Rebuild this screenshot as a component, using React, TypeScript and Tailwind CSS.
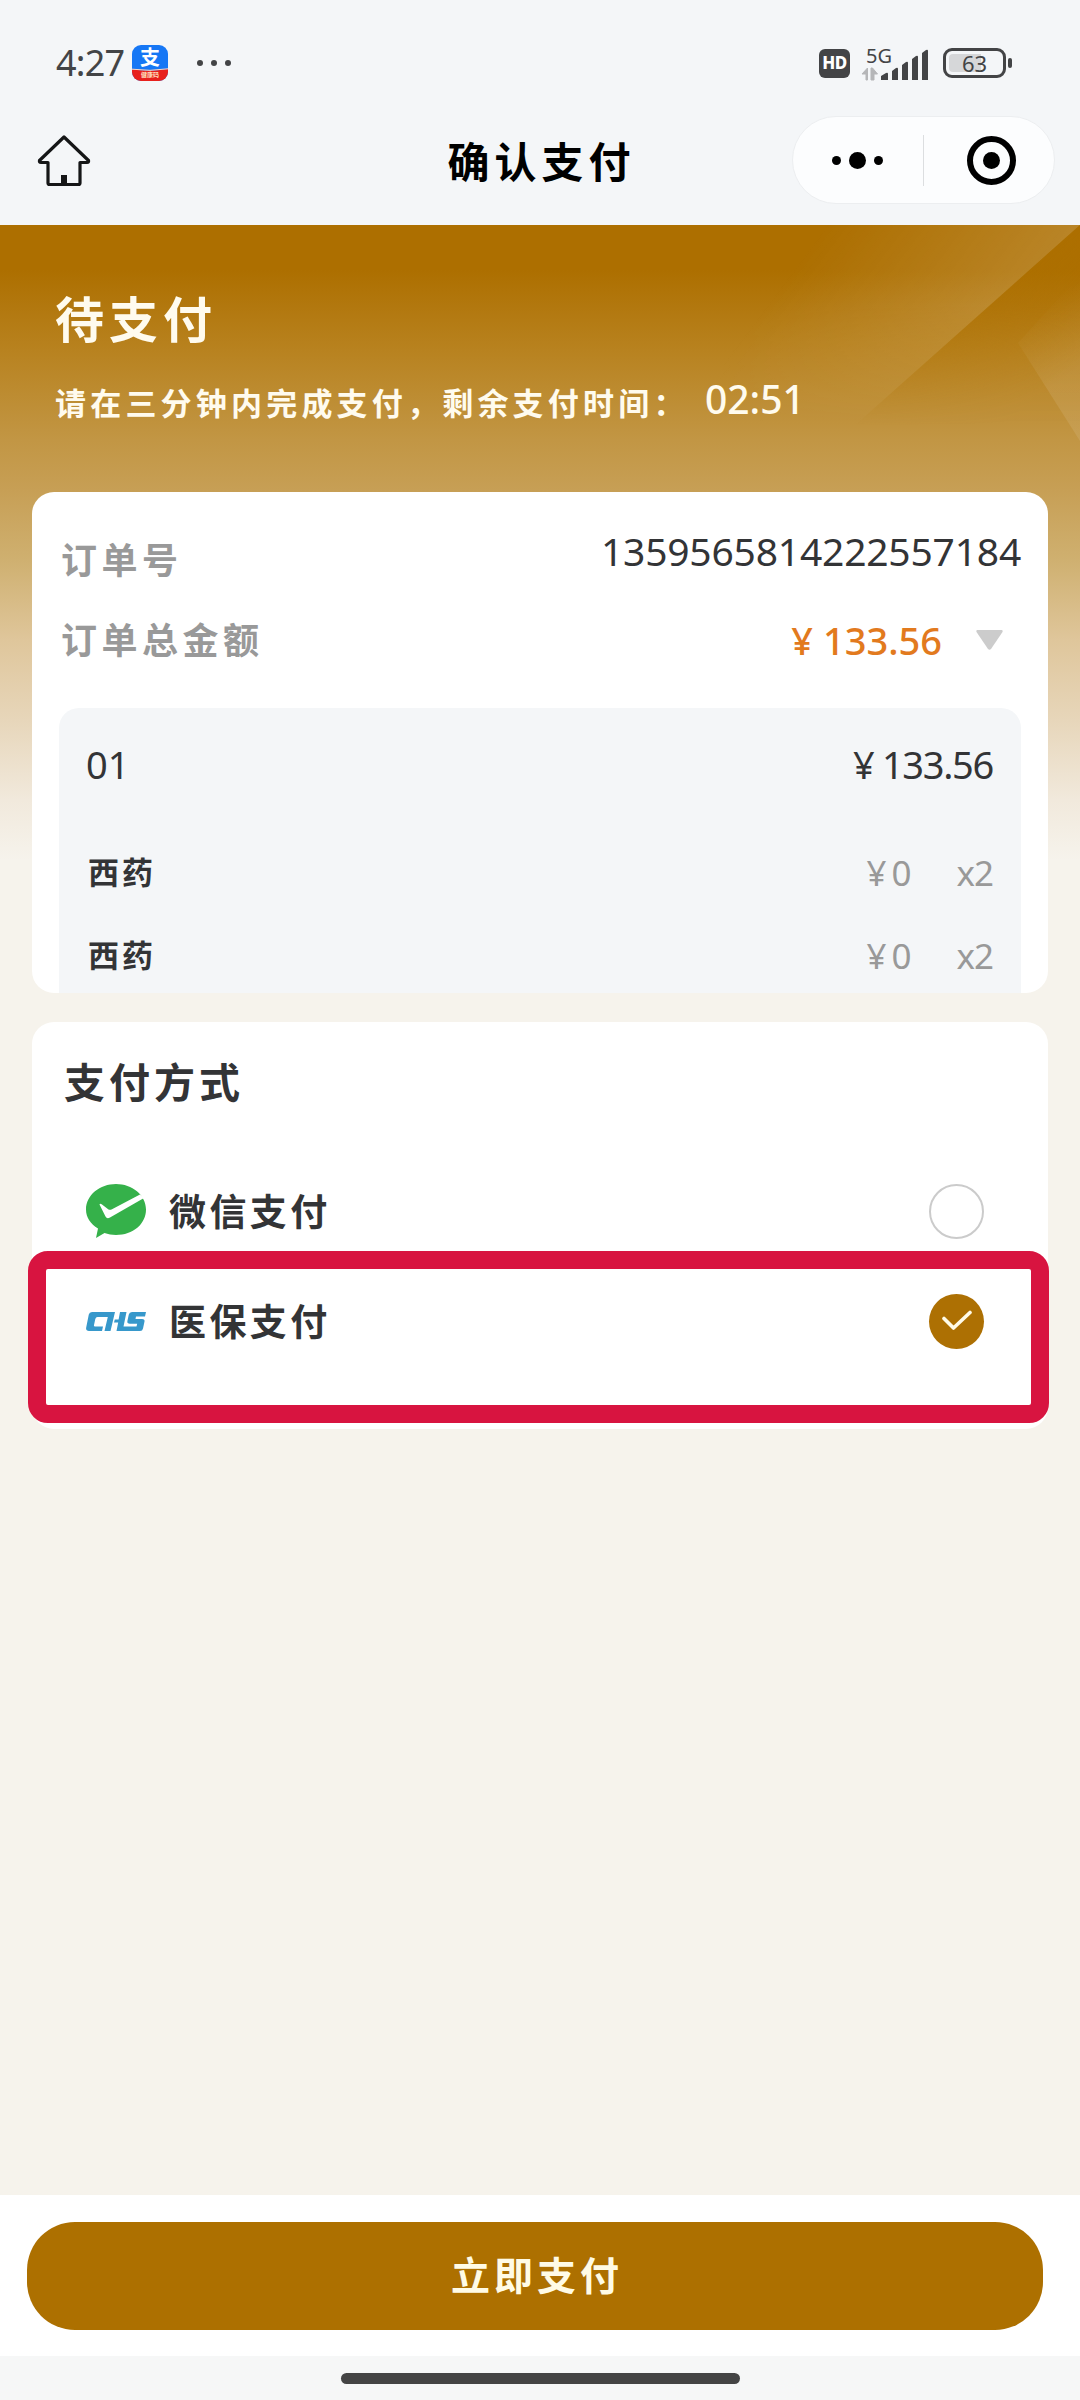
import { useState } from "react";

const CJK = "font-['Noto_Sans','Noto_Sans_CJK_SC',sans-serif]";

const medicines = [
  { name: "西药", price: "¥ 0", count: "x2" },
  { name: "西药", price: "¥ 0", count: "x2" },
];

function AlipayIcon() {
  return (
    <div className="relative flex h-9 w-9 flex-col items-center rounded-[9px] bg-[#1677f5]">
      <svg className="absolute inset-0 rounded-[9px]" viewBox="0 0 36 36" width="36" height="36">
        <path d="M0 24.5Q18 27 36 24V36H0Z" fill="#e8201c" />
        <path d="M0 24.2Q18 26.7 36 23.8" fill="none" stroke="#ffd9c4" strokeWidth="1" />
      </svg>
      <span className="relative text-[20px] leading-[26px] font-bold text-white">支</span>
      <span className="relative text-[6px] leading-[8px] font-bold text-[#ffe3c0]">健康码</span>
    </div>
  );
}

function StatusBar() {
  return (
    <div className="flex h-[102px] items-start justify-between pt-[45px] pr-[68px] pl-[56px] text-[#434446]">
      <div className="flex h-9 items-center">
        <span className="w-[76px] text-[36px] leading-9 tracking-[-0.8px]">4:27</span>
        <AlipayIcon />
        <div className="ml-[29px] flex gap-2">
          <i className="h-1.5 w-1.5 rounded-full bg-[#434446]" />
          <i className="h-1.5 w-1.5 rounded-full bg-[#434446]" />
          <i className="h-1.5 w-1.5 rounded-full bg-[#434446]" />
        </div>
      </div>
      <div className="flex h-9 items-center">
        <div className="flex h-[29px] w-[31px] items-center justify-center rounded-[6px] bg-[#434446] text-[17px] font-extrabold tracking-[-0.5px] text-white">
          HD
        </div>
        <svg className="-mt-1.5 ml-[11px]" width="70" height="42" viewBox="0 -8 70 42">
          <text x="5" y="16" fontSize="20" fill="#434446">5G</text>
          <path d="M1 27l5.500-6v12H5v-6z M10 33V21h1.500l5 6h-3.500v6z" fill="#b5b6b8" stroke="#b5b6b8" strokeWidth="1" />
          <path
            d="M20 29l5-3q2-1 2 1v6h-7z M31 24l4-3q2-1 2 1v11h-6z M41 18l4-3q2-1 2 1v17h-6z M51 12l4-3q2-1 2 1v23h-6z M61 6l4-3q2-1 2 1v29h-6z"
            fill="#434446"
          />
        </svg>
        <div className="ml-[12px] flex h-[30px] w-[63px] items-center rounded-[9px] border-3 border-[#434446] p-[3px]">
          <div className="relative flex h-full w-full items-center justify-center">
            <i className="absolute top-0 left-0 h-full w-[32px] rounded-l-[4px] bg-[#d6d7d9]" />
            <span className="relative text-[22px] leading-[18px]">63</span>
          </div>
        </div>
        <i className="ml-0.5 h-2.5 w-1 rounded-full bg-[#434446]" />
      </div>
    </div>
  );
}

function NavBar() {
  return (
    <div className="grid h-[123px] grid-cols-3 items-start pr-[25px] pl-[37px]">
      <svg className="mt-8" width="54" height="54" viewBox="0 0 54 54" fill="none">
        <path
          d="M27 3L2.500 26.500Q2 28.500 4 28.500H11V49Q11 50.500 12.500 50.500H41.500Q43 50.500 43 49V28.500H50Q52 28.500 51.500 26.500Z"
          stroke="#151617"
          strokeWidth="3.200"
          strokeLinejoin="round"
        />
        <path d="M24 41h6v10h-6z" fill="#151617" />
      </svg>
      <h1 className="-ml-[9px] pt-[34px] text-center text-[42px] leading-[52px] font-bold tracking-[5px] whitespace-nowrap text-black">
        确认支付
      </h1>
      <div className="mt-[14px] flex h-[88px] w-[263px] items-center justify-self-end rounded-full border border-[#eceef0] bg-[#fcfdfe]">
        <div className="flex w-[130px] items-center justify-center gap-2 pr-0.5">
          <i className="h-[9px] w-[9px] rounded-full bg-black" />
          <i className="h-[17px] w-[17px] rounded-full bg-black" />
          <i className="h-[9px] w-[9px] rounded-full bg-black" />
        </div>
        <i className="h-[51px] w-px bg-[#dcdee0]" />
        <div className="ml-[43px] flex h-[49px] w-[49px] items-center justify-center rounded-full border-6 border-black">
          <i className="h-[17px] w-[17px] rounded-full bg-black" />
        </div>
      </div>
    </div>
  );
}

function BannerRays() {
  return (
    <svg className="absolute top-0 right-0" width="360" height="267" viewBox="0 0 360 267">
      <defs>
        <linearGradient id="ray" gradientUnits="userSpaceOnUse" x1="90" y1="20" x2="250" y2="140">
          <stop offset="0" stopColor="#fff" stopOpacity="0" />
          <stop offset="1" stopColor="#fff" stopOpacity="0.15" />
        </linearGradient>
        <linearGradient id="shade" gradientUnits="userSpaceOnUse" x1="262" y1="84" x2="330" y2="160">
          <stop offset="0" stopColor="#ad7000" stopOpacity="0.4" />
          <stop offset="1" stopColor="#ad7000" stopOpacity="0.05" />
        </linearGradient>
        <linearGradient id="corner" gradientUnits="userSpaceOnUse" x1="310" y1="85" x2="350" y2="150">
          <stop offset="0" stopColor="#fff" stopOpacity="0" />
          <stop offset="1" stopColor="#fff" stopOpacity="0.09" />
        </linearGradient>
        <linearGradient id="fade" x1="0" y1="0" x2="0" y2="1">
          <stop offset="0.3" stopColor="#fff" />
          <stop offset="0.75" stopColor="#000" />
        </linearGradient>
        <mask id="fadeDown">
          <rect width="360" height="267" fill="url(#fade)" />
        </mask>
      </defs>
      <g mask="url(#fadeDown)">
        <path d="M0 0H360L60 267H0Z" fill="url(#ray)" />
        <path d="M360 0L60 267H360Z" fill="url(#shade)" />
      </g>
      <path d="M360 50L298 118L360 216Z" fill="url(#corner)" />
    </svg>
  );
}

function WechatPayIcon() {
  return (
    <svg width="60" height="54" viewBox="0 0 60 54">
      <path
        d="M30 0C46 0 60 11 60 25.500S47 51 30 51C26 51 22 50.200 18.500 49L10 54L12 44.500C4.500 40 0 33.500 0 25.500C0 11 14 0 30 0Z"
        fill="#35b14a"
      />
      <path
        d="M13.500 20.500Q14 19 16 20.500L22.500 25.500Q24 26.300 26 25.300L54 10.500L58 14L24 33.500Q21 35.500 19.500 32.500Z"
        fill="#fff"
      />
    </svg>
  );
}

function ChsIcon() {
  return (
    <svg width="60" height="19" viewBox="0 0 60 19" fill="#3798cb">
      <path d="M6 0H29L24.500 19H18.500L21.800 5H11.500Q9.800 5 9.300 7L8 13Q7.600 14.500 9 14.500H17L16 19H3Q-.5 19 .2 15.500L2.800 2.500Q3.300 0 6 0Z" />
      <path d="M34 0H40.500L37.500 14.500H50.500L51.200 11.800H44Q40.800 11.800 41.400 9L42.800 2.500Q43.300 0 46 0H60L59 4.500H50L49.500 7H56Q59 7 58.500 9.500L57 16.500Q56.500 19 54 19H30.500L32.200 10.500H28L28.800 7.500H32.600Z" />
    </svg>
  );
}

function Radio({ checked }: { checked: boolean }) {
  if (!checked) {
    return <span className="h-[55px] w-[55px] rounded-full border-2 border-[#cbcbcb]" />;
  }
  return (
    <span className="flex h-[55px] w-[55px] items-center justify-center rounded-full bg-[#ad7003]">
      <svg width="32" height="22" viewBox="0 0 32 22" fill="none">
        <path d="M3 8.500L12.500 18L29 2.500" stroke="#fffbe8" strokeWidth="3.600" strokeLinecap="round" strokeLinejoin="round" />
      </svg>
    </span>
  );
}

export default function App() {
  const [method, setMethod] = useState<"wechat" | "chs">("chs");

  return (
    <div className={`flex h-[2400px] w-[1080px] flex-col overflow-hidden bg-[#f6f3ec] ${CJK}`}>
      <header className="h-[225px] shrink-0 bg-[#f4f6f8]">
        <StatusBar />
        <NavBar />
      </header>

      <main className="relative flex-1 bg-[linear-gradient(180deg,#ad6f00_0px,#ad6f00_45px,#b8821f_125px,#c29644_215px,#c79f55_265px,#cfb070_335px,#dfc69b_415px,#e7d6ba_495px,#f1e9dc_575px,#f6f3ec_635px,#f6f3ec_100%)]">
        <BannerRays />

        <section className="relative h-[267px] pl-[55px] text-[#fffbee]">
          <h2 className="pt-[64px] text-[49px] leading-[60px] font-bold tracking-[5px]">待支付</h2>
          <div className="mt-[28px] flex items-center">
            <p className="w-[650px] text-[31px] leading-[52px] font-bold tracking-[4.200px] whitespace-nowrap">
              请在三分钟内完成支付，剩余支付时间：
            </p>
            <span className="-mt-2 text-[39px] leading-[52px] font-medium">02:51</span>
          </div>
        </section>

        {/* Order summary */}
        <section className="relative mx-8 h-[501px] overflow-hidden rounded-[22px] bg-white px-[27px]">
          <div className="flex h-[122px] items-end justify-between pl-0.5 text-[#333436]">
            <span className="pb-[27px] text-[36px] leading-[52px] font-bold tracking-[4.500px] text-[#999]">订单号</span>
            <span className="pb-[37px] text-[39px] leading-[52px] tracking-[-0.2px]">1359565814222557184</span>
          </div>
          <div className="flex h-[94px] items-start justify-between pr-[18px] pl-0.5">
            <span className="pt-px text-[36px] leading-[52px] font-bold tracking-[4.500px] text-[#999]">订单总金额</span>
            <div className="flex items-center">
              <span className="text-[38px] leading-[52px] font-medium text-[#e27a1e]">¥ 133.56</span>
              <svg className="ml-[34px]" width="27" height="20" viewBox="0 0 27 20">
                <path d="M1 0H26Q27 .5 26.500 2L15 19Q13.500 20.500 12 19L.5 2Q0 .5 1 0Z" fill="#ccc" />
              </svg>
            </div>
          </div>

          <div className="h-[285px] rounded-t-[20px] bg-[#f4f6f8] pr-[28px] pl-[27px]">
            <div className="flex h-[123px] items-start justify-between pt-[30px] text-[38px] leading-[52px] text-[#333436]">
              <span>01</span>
              <span className="tracking-[-1.300px]">¥ 133.56</span>
            </div>
            {medicines.map((item, idx) => (
              <div key={idx} className="flex h-[83px] items-center justify-between text-[#333436]">
                <span className="pb-0.5 pl-0.5 text-[31px] leading-10 font-bold tracking-[3px]">{item.name}</span>
                <div className="flex items-center text-[35px] leading-10 text-[#999]">
                  <span className="w-[90px] tracking-[-2px]">{item.price}</span>
                  <span className="tracking-[-1px]">{item.count}</span>
                </div>
              </div>
            ))}
          </div>
        </section>

        {/* Payment methods */}
        <section className="relative mx-8 mt-[29px] h-[407px] rounded-[22px] bg-white pr-[64px] pl-[54px] text-[#333436]">
          <h3 className="-ml-[22px] pt-[34px] text-[41px] leading-[52px] font-bold tracking-[4px]">支付方式</h3>
          <button className="mt-[48px] flex h-[110px] w-full items-center" onClick={() => setMethod("wechat")}>
            <WechatPayIcon />
            <span className="ml-[23px] flex-1 pt-0.5 text-left text-[37px] font-bold tracking-[3.400px]">微信支付</span>
            <Radio checked={method === "wechat"} />
          </button>
          <button className="flex h-[110px] w-full items-center" onClick={() => setMethod("chs")}>
            <ChsIcon />
            <span className="ml-[23px] flex-1 pt-0.5 text-left text-[37px] font-bold tracking-[3.400px]">医保支付</span>
            <Radio checked={method === "chs"} />
          </button>
          <div className="pointer-events-none absolute top-[229px] -left-1 h-[172px] w-[1021px] rounded-[20px] border-18 border-[#d81440]" />
        </section>
      </main>

      <footer className="shrink-0">
        <div className="h-[161px] bg-white pt-[27px] pr-[37px] pl-[27px]">
          <button className="h-[108px] w-full rounded-[48px] bg-[#ad7000] pb-0.5 pl-1 text-[39px] font-bold tracking-[4px] text-[#fffbe6]">
            立即支付
          </button>
        </div>
        <div className="flex h-11 justify-center bg-[#f6f7f7] pt-[17px]">
          <i className="h-[11px] w-[399px] rounded-full bg-[#444]" />
        </div>
      </footer>
    </div>
  );
}
